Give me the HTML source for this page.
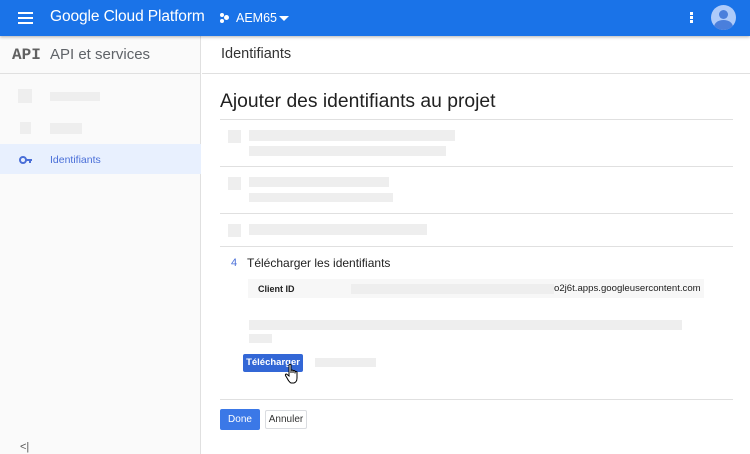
<!DOCTYPE html>
<html><head><meta charset="utf-8"><style>
*{margin:0;padding:0;box-sizing:border-box}
body{width:750px;height:454px;overflow:hidden;background:#fff;font-family:"Liberation Sans",Arial,sans-serif;position:relative;color:#212121}
.abs{position:absolute}
.g{position:absolute;background:#eeeeee}
.hr{position:absolute;height:1px;background:#e0e0e0}
</style></head><body>
<div class="abs" style="left:0;top:0;width:750px;height:36px;background:#1a73e8;box-shadow:0 1px 3px rgba(0,0,0,.3);z-index:2">
  <div class="abs" style="left:18px;top:12px;width:15px;height:2px;background:#fff;box-shadow:0 5px 0 #fff,0 10px 0 #fff"></div>
  <div class="abs" style="left:50px;top:8px;color:#fff;font-size:15.5px;letter-spacing:-0.1px">Google Cloud Platform</div>
  <div class="abs" style="left:220px;top:13px;width:4px;height:4px;border-radius:50%;background:#fff"></div>
  <div class="abs" style="left:220px;top:19px;width:4px;height:4px;border-radius:50%;background:#fff"></div>
  <div class="abs" style="left:224px;top:15px;width:5px;height:5px;border-radius:50%;background:#fff"></div>
  <div class="abs" style="left:236px;top:11px;color:#fff;font-size:12.5px">AEM65</div>
  <div class="abs" style="left:279px;top:16px;border-left:5px solid transparent;border-right:5px solid transparent;border-top:5px solid #fff"></div>
  <div class="abs" style="left:690px;top:12px;width:3px;height:3px;background:#fff;box-shadow:0 4px 0 #fff,0 8px 0 #fff"></div>
  <div class="abs" style="left:711px;top:5px;width:25px;height:25px;border-radius:50%;background:#aecbfa;overflow:hidden">
    <div class="abs" style="left:8px;top:5px;width:9px;height:9px;border-radius:50%;background:#4a7fdc"></div>
    <div class="abs" style="left:3px;top:15px;width:19px;height:14px;border-radius:50%;background:#4a7fdc"></div>
  </div>
</div>
<div class="abs" style="left:0;top:36px;width:201px;height:418px;background:#fafafa;border-right:1px solid #e0e0e0"></div>
<div class="abs" style="left:12px;top:46px;font-family:'Liberation Mono',monospace;font-weight:bold;font-size:16px;color:#616161">API</div>
<div class="abs" style="left:50px;top:46px;font-size:15px;color:#5f6368">API et services</div>
<div class="hr" style="left:0;top:73px;width:201px"></div>
<div class="g" style="left:18px;top:89px;width:14px;height:14px"></div>
<div class="g" style="left:50px;top:92px;width:50px;height:9px"></div>
<div class="g" style="left:20px;top:122px;width:11px;height:12px"></div>
<div class="g" style="left:50px;top:123px;width:32px;height:11px"></div>
<div class="abs" style="left:0;top:144px;width:201px;height:30px;background:#e8f0fe"></div>
<div class="abs" style="left:19px;top:156px;width:8px;height:8px;border:2px solid #4a6fd8;border-radius:50%"></div>
<div class="abs" style="left:26px;top:159px;width:6px;height:2px;background:#4a6fd8"></div>
<div class="abs" style="left:29px;top:159px;width:2px;height:4px;background:#4a6fd8"></div>
<div class="abs" style="left:50px;top:154px;font-size:10.5px;color:#4a6fd8">Identifiants</div>
<div class="abs" style="left:20px;top:441px;font-size:11px;color:#555">&lt;|</div>
<div class="abs" style="left:221px;top:46px;font-size:14.5px;color:#333">Identifiants</div>
<div class="hr" style="left:202px;top:73px;width:548px"></div>
<div class="abs" style="left:220px;top:91px;font-size:19.3px;color:#212121">Ajouter des identifiants au projet</div>
<div class="hr" style="left:220px;top:119px;width:513px"></div>
<div class="g" style="left:228px;top:130px;width:13px;height:13px"></div>
<div class="g" style="left:249px;top:130px;width:206px;height:11px"></div>
<div class="g" style="left:249px;top:146px;width:197px;height:10px"></div>
<div class="hr" style="left:220px;top:166px;width:513px"></div>
<div class="g" style="left:228px;top:177px;width:13px;height:13px"></div>
<div class="g" style="left:249px;top:177px;width:140px;height:10px"></div>
<div class="g" style="left:249px;top:193px;width:144px;height:9px"></div>
<div class="hr" style="left:220px;top:213px;width:513px"></div>
<div class="g" style="left:228px;top:224px;width:13px;height:13px"></div>
<div class="g" style="left:249px;top:224px;width:178px;height:11px"></div>
<div class="hr" style="left:220px;top:246px;width:513px"></div>
<div class="abs" style="left:231px;top:257px;font-size:11px;color:#4a6fd8">4</div>
<div class="abs" style="left:247px;top:256px;font-size:12px;color:#212121">Télécharger les identifiants</div>
<div class="abs" style="left:248px;top:279px;width:456px;height:19px;background:#f7f7f7"></div>
<div class="abs" style="left:258px;top:284px;font-size:9px;font-weight:bold;color:#212121">Client ID</div>
<div class="g" style="left:351px;top:284px;width:203px;height:10px"></div>
<div class="abs" style="left:554px;top:283px;font-size:9.6px;color:#212121">o2j6t.apps.googleusercontent.com</div>
<div class="g" style="left:249px;top:320px;width:433px;height:10px"></div>
<div class="g" style="left:249px;top:334px;width:23px;height:9px"></div>
<div class="abs" style="left:243px;top:354px;width:60px;height:18px;background:#3367d6;border-radius:2px;color:#fff;font-size:9.5px;font-weight:bold;text-align:center;line-height:18px">Télécharger</div>
<div class="g" style="left:315px;top:358px;width:61px;height:9px"></div>
<svg class="abs" style="left:284px;top:363px" width="18" height="22" viewBox="0 0 18 22"><path d="M5 2 Q6 0.5 7 2 L7 10 L7 7.5 Q8 6.5 9 7.5 L9 10 L9 8 Q10 7 11 8 L11 10.5 L11 9 Q12 8 13 9 L13 15 Q13 19 10 20 L7 20 Q5 19 3 15 L1.5 12.5 Q1 11 2.5 11 L5 13 Z" fill="#fff" stroke="#000" stroke-width="1"/></svg>
<div class="hr" style="left:220px;top:399px;width:513px"></div>
<div class="abs" style="left:220px;top:409px;width:40px;height:21px;background:#3b78e7;border-radius:2px;color:#fff;font-size:10px;text-align:center;line-height:21px">Done</div>
<div class="abs" style="left:265px;top:410px;width:42px;height:19px;border:1px solid #dadce0;border-radius:2px;color:#333;font-size:10px;text-align:center;line-height:17px">Annuler</div>
</body></html>
